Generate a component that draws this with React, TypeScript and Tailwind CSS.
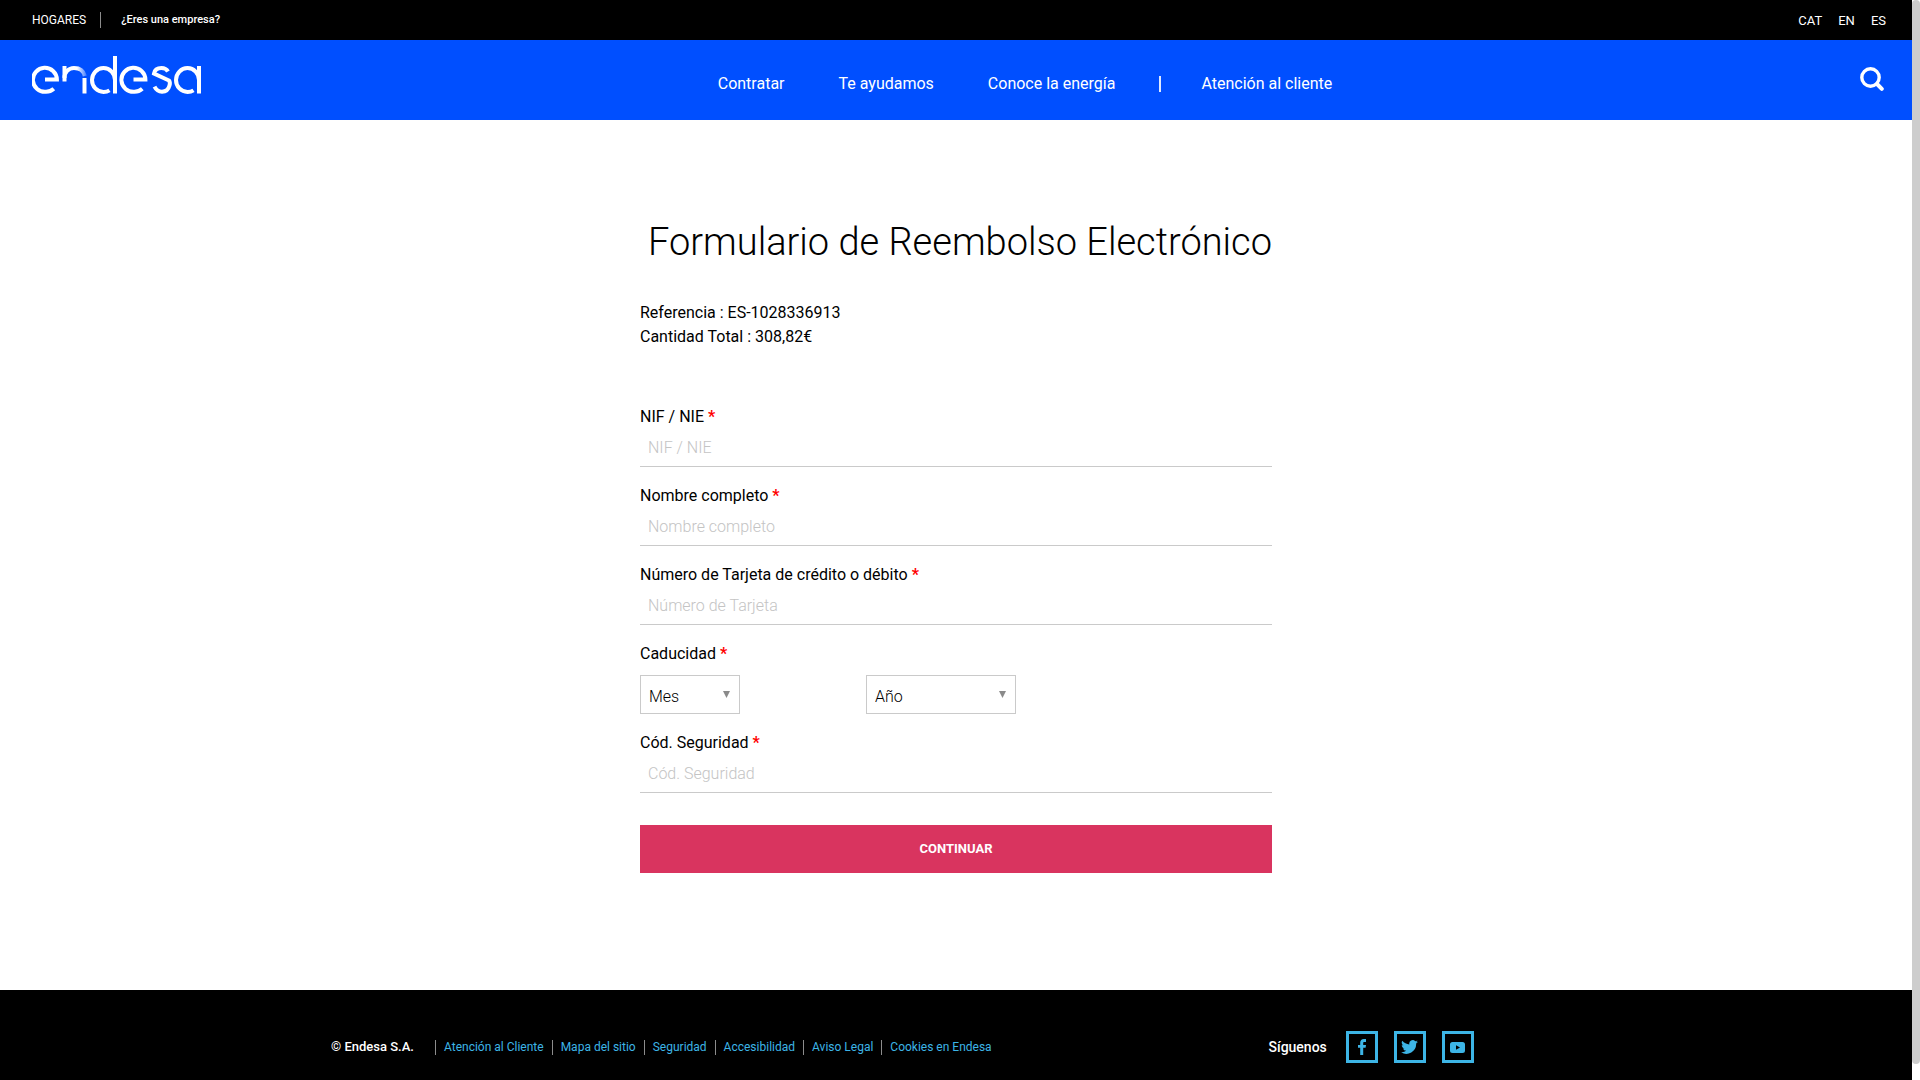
import React from "react";

const pageFont = "font-['Roboto','Liberation_Sans',sans-serif]";

function Logo() {
  return (
    <svg
      viewBox="0 0 170 38"
      className="h-[38px] w-[170px]"
      fill="none"
      stroke="white"
      strokeWidth="4"
      role="img"
      aria-label="endesa"
    >
      <defs>
        <linearGradient id="fadeArch" x1="45" x2="54" y1="0" y2="0" gradientUnits="userSpaceOnUse">
          <stop offset="0" stopColor="white" />
          <stop offset="1" stopColor="white" stopOpacity="0.3" />
        </linearGradient>
      </defs>
      <path d="M13 23.5h11.9A12 12 0 1 0 14 35.8q4.500 0 7.800-3" />
      <path d="M32.500 25.500V10" />
      <path d="M32.500 22A9.500 9.500 0 0 1 42 12q9 0 10.800 8" stroke="url(#fadeArch)" />
      <path d="M52.500 22v15.500" />
      <path d="M83 0v37.500M83 24A11.500 12 0 1 0 71.500 36q3.500 0 6-1.600" />
      <path d="M101.500 23.500h11.900A12 12 0 1 0 102.500 35.800q4.500 0 7.800-3" />
      <path d="M136 15.500Q134 12 129.500 12q-6.500 0-7.500 5.500l15 7q1.500 2 .5 5-1.500 6-7.500 6.200-5 0-7.500-5" />
      <path d="M167 10v27.500M167 24A11.500 12 0 1 0 155.500 36q3.500 0 6-1.600" />
    </svg>
  );
}

function Required() {
  return <span className="font-bold text-[#ff0000]"> *</span>;
}

function Field({ id, label, placeholder }: { id: string; label: string; placeholder: string }) {
  return (
    <div className="mb-[19px]">
      <label htmlFor={id} className="block text-base leading-5">
        {label}
        <Required />
      </label>
      <input
        id={id}
        type="text"
        placeholder={placeholder}
        className="block h-10 w-full border-b border-[#cacaca] bg-white px-2 pt-px text-base font-light outline-none placeholder:text-[#c4c4c4]"
      />
    </div>
  );
}

function Picker({ id, label, className }: { id: string; label: string; className: string }) {
  return (
    <div className={"relative h-[39px] " + className}>
      <select
        id={id}
        aria-label={label}
        className="h-full w-full appearance-none border border-[#cacaca] bg-white px-2 pt-1 text-base font-light text-black outline-none"
      >
        <option>{label}</option>
      </select>
      <svg viewBox="0 0 7 7" className="pointer-events-none absolute top-4 right-2.5 h-[7px] w-[7px]" fill="#8a8a8a">
        <path d="M0 0h7L3.500 7z" />
      </svg>
    </div>
  );
}

const footerLinks = [
  "Atención al Cliente",
  "Mapa del sitio",
  "Seguridad",
  "Accesibilidad",
  "Aviso Legal",
  "Cookies en Endesa",
];

function Social({ label, children }: { label: string; children: React.ReactNode }) {
  return (
    <a href="#" aria-label={label} className="flex h-8 w-8 items-center justify-center border-[3px] border-[#3db5e6] text-[#3db5e6]">
      {children}
    </a>
  );
}

export default function App() {
  return (
    <div className={"flex min-h-screen bg-white text-black " + pageFont}>
      <div className="flex min-w-0 flex-1 flex-col">
        <header>
          <div className="flex h-10 items-center justify-between bg-black pr-[26px] pl-8 text-white">
            <div className="flex items-center">
              <a href="#" className="text-xs">HOGARES</a>
              <span className="mr-5 ml-3.5 h-4 w-px bg-[#8c8c8c]" />
              <a href="#" className="text-[11px] font-medium">¿Eres una empresa?</a>
            </div>
            <div className="flex gap-4 pt-0.5 text-[13px]">
              <a href="#">CAT</a>
              <a href="#">EN</a>
              <a href="#">ES</a>
            </div>
          </div>
          <div className="flex h-20 items-center justify-between bg-[#004fff] pr-7 pl-8 text-white">
            <a href="#" className="mb-2.5">
              <Logo />
            </a>
            <nav className="mt-2 flex items-center pr-3 text-base">
              <a href="#">Contratar</a>
              <a href="#" className="ml-[54px]">Te ayudamos</a>
              <a href="#" className="ml-[54px]">Conoce la energía</a>
              <span className="mr-10 ml-11 h-4 w-0.5 bg-[#dfe9ff]" />
              <a href="#">Atención al cliente</a>
            </nav>
            <button type="button" aria-label="Buscar" className="mb-0.5">
              <svg viewBox="0 0 24 24" className="h-6 w-6" fill="none" stroke="white">
                <circle cx="10.500" cy="10.500" r="8.700" strokeWidth="3.400" />
                <path d="M17 17l4.800 4.800" strokeWidth="4" strokeLinecap="round" />
              </svg>
            </button>
          </div>
        </header>

        <main className="mx-auto w-[632px] max-w-full flex-1 pb-28">
          <h1 className="mt-[99px] text-right text-[38px] leading-[46px] font-light whitespace-nowrap">
            Formulario de Reembolso Electrónico
          </h1>
          <div className="mt-9 text-base leading-6">
            <p>Referencia : ES-1028336913</p>
            <p>Cantidad Total : 308,82€</p>
          </div>
          <form className="mt-[58px] flex flex-col" onSubmit={(e) => e.preventDefault()}>
            <Field id="nif" label="NIF / NIE" placeholder="NIF / NIE" />
            <Field id="nombre" label="Nombre completo" placeholder="Nombre completo" />
            <Field id="tarjeta" label="Número de Tarjeta de crédito o débito" placeholder="Número de Tarjeta" />
            <div className="mb-[19px]">
              <label htmlFor="mes" className="block text-base leading-5">
                Caducidad
                <Required />
              </label>
              <div className="mt-[11px] flex gap-[126px]">
                <Picker id="mes" label="Mes" className="w-[100px]" />
                <Picker id="anyo" label="Año" className="w-[150px]" />
              </div>
            </div>
            <Field id="cvv" label="Cód. Seguridad" placeholder="Cód. Seguridad" />
            <button type="submit" className="mt-[13px] h-12 w-full bg-[#d9345f] text-[13px] font-bold text-white">
              CONTINUAR
            </button>
          </form>
        </main>

        <footer className="h-[90px] bg-black text-white">
          <div className="mx-auto flex w-[1250px] max-w-full pt-[41px]">
            <div className="flex h-8 w-3/4 items-center">
              <span className="w-[104px] text-[13px] font-medium">© Endesa S.A.</span>
              {footerLinks.map((l) => (
                <a key={l} href="#" className="mr-2 border-l border-[#8c8c8c] pl-2 text-xs leading-[15px] text-[#3db5e6]">
                  {l}
                </a>
              ))}
            </div>
            <div className="flex h-8 items-center gap-4">
              <span className="mr-[3px] text-sm font-medium">Síguenos</span>
              <Social label="Facebook">
                <svg viewBox="0 0 8 16" className="h-4 w-2" fill="currentColor">
                  <path d="M8 .1V3H6.500C5.400 3 5.200 3.500 5.200 4.200V6H8L7.600 8.800H5.200V16H2.200V8.800H0V6h2.200V3.800C2.200 1.400 3.600 0 5.800 0z" />
                </svg>
              </Social>
              <Social label="Twitter">
                <svg viewBox="0 2 24 20" className="h-[14px] w-[17px]" fill="currentColor">
                  <path d="M24 4.600a10 10 0 0 1-2.800.8 5 5 0 0 0 2.100-2.700 10 10 0 0 1-3.100 1.200 4.900 4.900 0 0 0-8.400 4.500A14 14 0 0 1 1.700 3.200a4.900 4.900 0 0 0 1.500 6.500 5 5 0 0 1-2.200-.6v.1a4.900 4.900 0 0 0 3.900 4.800 5 5 0 0 1-2.200.1 4.900 4.900 0 0 0 4.600 3.400A9.900 9.900 0 0 1 0 19.500 14 14 0 0 0 21.500 7.100 10 10 0 0 0 24 4.600z" />
                </svg>
              </Social>
              <Social label="YouTube">
                <svg viewBox="0 0 15 11" className="h-[11px] w-[15px]" fill="currentColor" fillRule="evenodd">
                  <path d="M2.500 0h10Q15 0 15 2.500v6Q15 11 12.500 11h-10Q0 11 0 8.500v-6Q0 0 2.500 0zM6 3.200v4.600l4-2.300z" />
                </svg>
              </Social>
            </div>
          </div>
        </footer>
      </div>
      <div className="w-2 bg-white pb-4" aria-hidden="true">
        <div className="h-full rounded-full bg-[#cdcdcd]" />
      </div>
    </div>
  );
}
